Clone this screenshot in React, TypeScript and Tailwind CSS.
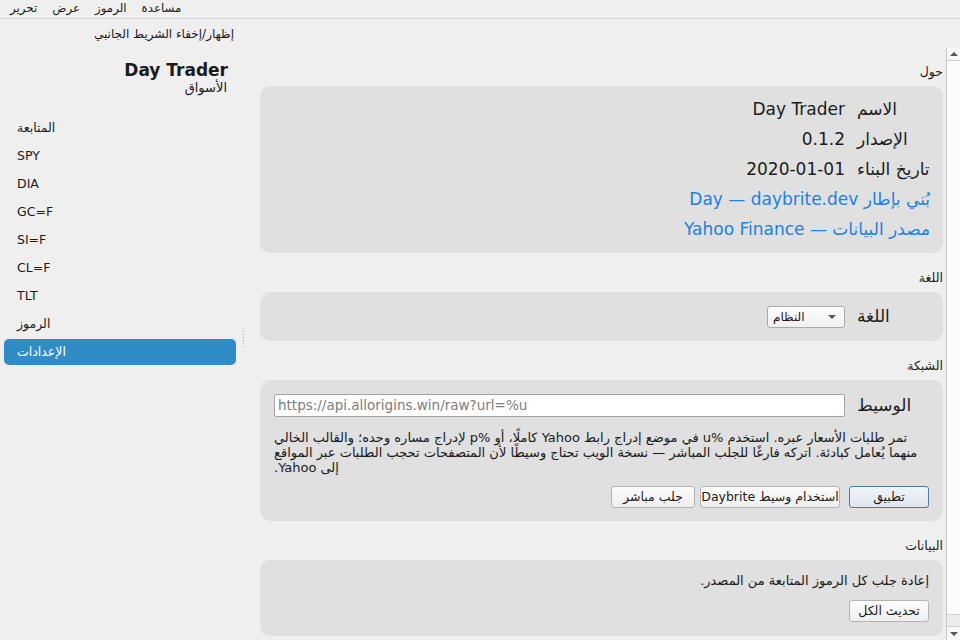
const menuItems = ["تحرير", "عرض", "الرموز", "مساعدة"];
const sideItems = ["المتابعة", "SPY", "DIA", "GC=F", "SI=F", "CL=F", "TLT", "الرموز", "الإعدادات"];

const aboutRows = [
  { label: "الاسم", value: "Day Trader" },
  { label: "الإصدار", value: "0.1.2" },
  { label: "تاريخ البناء", value: "2020-01-01" },
];

function SectionLabel({ text, first }: { text: string; first?: boolean }) {
  return (
    <div className={`${first ? "mt-[16px]" : "mt-[17px]"} h-[16px] text-[12.5px] leading-[16px] mb-[6px]`}>
      {text}
    </div>
  );
}

function Btn({ children, primary, className = "" }: { children: React.ReactNode; primary?: boolean; className?: string }) {
  return (
    <button
      className={`h-[22px] rounded-[3px] border text-[12.5px] leading-none px-0 whitespace-nowrap ${
        primary
          ? "border-[#4a7aa8] bg-gradient-to-b from-[#f0f4f8] to-[#dfe6ee]"
          : "border-[#b4b4b4] bg-gradient-to-b from-[#fdfdfd] to-[#eeeeee]"
      } ${className}`}
    >
      {children}
    </button>
  );
}

export default function App() {
  return (
    <div className="w-[960px] h-[640px] overflow-hidden bg-[#efefef] text-[#1b1b1b] font-['DejaVu_Sans',sans-serif] flex flex-col">
      {/* menu bar */}
      <div className="h-[19px] border-b border-[#d8d8d8] flex items-center pl-[10px] gap-[15px] text-[11.8px]">
        {menuItems.map((m) => (
          <span key={m}>{m}</span>
        ))}
      </div>

      {/* toolbar */}
      <div className="h-[29px] flex items-center">
        <div className="w-[240px] text-right pr-[6px] text-[12px]" dir="rtl">
          إظهار/إخفاء الشريط الجانبي
        </div>
      </div>

      <div className="flex flex-1 min-h-0">
        {/* sidebar */}
        <div className="w-[240px] flex flex-col">
          <div className="mt-[12px] pr-[12px] text-right text-[17px] font-bold leading-[20px]">Day Trader</div>
          <div className="pr-[13px] text-right text-[13px] leading-[16px]" dir="rtl">
            الأسواق
          </div>
          <div className="mt-[18px] flex flex-col">
            {sideItems.map((s) => {
              const active = s === "الإعدادات";
              return (
                <div key={s} className="h-[28px] py-[1px] pl-[4px] pr-[4px]">
                  <div
                    className={`h-[26px] rounded-[5px] pl-[13px] flex items-center text-[12.5px] ${
                      active ? "bg-[#308cc6] text-white" : ""
                    }`}
                  >
                    <span>{s}</span>
                  </div>
                </div>
              );
            })}
          </div>
        </div>

        {/* splitter */}
        <div className="w-[6px] flex items-center justify-center">
          <div className="flex flex-col gap-[2px] mt-[-10px]">
            {[0, 1, 2, 3, 4, 5].map((i) => (
              <div key={i} className="w-[1px] h-[1px] bg-[#a9a9a9]" />
            ))}
          </div>
        </div>

        {/* scroll area */}
        <div className="flex-1 flex min-w-0">
          <div className="flex-1 pl-[14px] pr-[3px]" dir="rtl">
            <SectionLabel text="حول" first />
            <div className="bg-[#e0e0e0] rounded-[10px] pt-[9px] pb-[8px] pr-[13px] pl-[14px]">
              {aboutRows.map((r) => (
                <div key={r.label} className="h-[30px] flex items-center text-[17px]">
                  <div className="w-[73px] text-left">{r.label}</div>
                  <div className="flex-1 mr-[12px] text-right">{r.value}</div>
                </div>
              ))}
              <div className="h-[30px] flex items-center text-[17px] text-[#2181df]">بُني بإطار Day — daybrite.dev</div>
              <div className="h-[30px] flex items-center text-[17px] text-[#2181df]">مصدر البيانات — Yahoo Finance</div>
            </div>

            <SectionLabel text="اللغة" />
            <div className="bg-[#e0e0e0] rounded-[10px] h-[49px] pr-[13px] pl-[14px] flex items-center">
              <div className="w-[73px] text-left text-[17px]">اللغة</div>
              <div
                className="mr-[12px] w-[78px] h-[22px] rounded-[3px] border border-[#a9a9a9] bg-gradient-to-b from-[#fdfdfd] to-[#f0f0f0] flex items-center justify-between pl-[5px] pr-[8px]"
                dir="ltr"
              >
                <span className="text-[12px]" dir="rtl">
                  النظام
                </span>
                <div className="w-0 h-0 border-l-[4px] border-r-[4px] border-t-[4px] border-l-transparent border-r-transparent border-t-[#555]" />
              </div>
            </div>

            <SectionLabel text="الشبكة" />
            <div className="bg-[#e0e0e0] rounded-[10px] h-[141px] pt-[14px] pr-[13px] pl-[14px] flex flex-col">
              <div className="flex items-center h-[23px]">
                <div className="w-[73px] text-left text-[17px]">الوسيط</div>
                <div
                  className="mr-[12px] flex-1 h-[23px] bg-white border border-[#a3a3a3] rounded-[2px] flex items-center pl-[3px] text-[13.5px] text-[#7d7d7d]"
                  dir="ltr"
                >
                  https://api.allorigins.win/raw?url=%u
                </div>
              </div>
              <div className="mt-[13px] text-[13px] leading-[15px] text-left">
                <div className="whitespace-nowrap">
                  تمر طلبات الأسعار عبره. استخدم %u في موضع إدراج رابط Yahoo كاملًا، أو %p لإدراج مساره وحده؛ والقالب الخالي
                </div>
                <div className="whitespace-nowrap">
                  منهما يُعامل كبادئة. اتركه فارغًا للجلب المباشر — نسخة الويب تحتاج وسيطًا لأن المتصفحات تحجب الطلبات عبر المواقع
                </div>
                <div className="whitespace-nowrap">إلى Yahoo.</div>
              </div>
              <div className="mt-[11px] flex items-center pr-[1px]">
                <Btn primary className="w-[80px]">
                  تطبيق
                </Btn>
                <Btn className="mr-[9px] w-[140px]">استخدام وسيط Daybrite</Btn>
                <Btn className="mr-[5px] w-[84px]">جلب مباشر</Btn>
              </div>
            </div>

            <SectionLabel text="البيانات" />
            <div className="bg-[#e0e0e0] rounded-[10px] h-[76px] pt-[13px] pr-[14px] pl-[14px] flex flex-col">
              <div className="text-[13px] leading-[16px]">إعادة جلب كل الرموز المتابعة من المصدر.</div>
              <div className="mt-[11px] flex">
                <Btn className="w-[80px]">تحديث الكل</Btn>
              </div>
            </div>
          </div>

          {/* scrollbar */}
          <div className="w-[14px] border-l border-[#c6c6c6] bg-[#f7f7f7] flex flex-col">
            <div className="h-[13px] border-b border-[#d2d2d2] flex items-center justify-center">
              <div className="w-0 h-0 border-l-[4px] border-r-[4px] border-b-[4px] border-l-transparent border-r-transparent border-b-[#555]" />
            </div>
            <div className="flex-1 bg-[#fcfcfc]" />
            <div className="h-[12px] border-t border-[#d2d2d2] bg-[#ececec]" />
            <div className="h-[14px] border-t border-[#d2d2d2] flex items-center justify-center">
              <div className="w-0 h-0 border-l-[4px] border-r-[4px] border-t-[4px] border-l-transparent border-r-transparent border-t-[#555]" />
            </div>
          </div>
        </div>
      </div>
    </div>
  );
}
